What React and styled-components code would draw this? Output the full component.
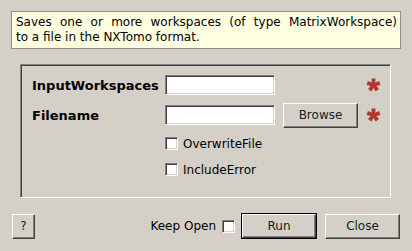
import React from 'react'
import styled, { createGlobalStyle } from 'styled-components'

const Global = createGlobalStyle`
    html, body {
        margin: 0;
        padding: 0;
        background: #d4d0c8;
    }
    body {
        font-family: 'DejaVu Sans', 'Liberation Sans', sans-serif;
        font-size: 12px;
        color: #000;
    }
`

const Dialog = styled.div`
    width: 412px;
    height: 251px;
    box-sizing: border-box;
    padding-top: 11px;
    display: flex;
    flex-direction: column;
    background: #d4d0c8;
`

const Description = styled.div`
    margin: 0 11px;
    height: 38px;
    box-sizing: border-box;
    padding: 3px 3px 0 4px;
    background: #ffffe1;
    border: 1px solid #8e8e8e;
    line-height: 15px;
`

const JustifiedLine = styled.div`
    text-align: justify;
    text-align-last: justify;
    white-space: nowrap;
`

const GroupBox = styled.div`
    margin: 15px 0 0 20px;
    width: 371px;
    height: 134px;
    box-sizing: border-box;
    border-top: 1px solid #808080;
    border-left: 1px solid #808080;
    border-right: 1px solid #fff;
    border-bottom: 1px solid #fff;
    box-shadow: inset 1px 1px 0 #404040;
    padding: 7px 0 0 11px;
`

const FieldGrid = styled.div`
    display: grid;
    grid-template-columns: 125px 110px 75px 15px;
    grid-template-rows: 26px 26px 23px 21px;
    column-gap: 8px;
    row-gap: 4px;
    align-items: center;
`

const Label = styled.div`
    font-weight: bold;
    font-size: 13px;
    white-space: nowrap;
`

const TextInput = styled.div`
    height: 20px;
    box-sizing: border-box;
    background: #fff;
    border-top: 1px solid #808080;
    border-left: 1px solid #808080;
    border-right: 1px solid #fff;
    border-bottom: 1px solid #fff;
    box-shadow: inset 1px 1px 0 #404040, inset -1px -1px 0 #d4d0c8;
`

const Button = styled.div`
    display: flex;
    align-items: center;
    justify-content: center;
    box-sizing: border-box;
    width: ${p => p.$w}px;
    height: ${p => p.$h}px;
    background: #d4d0c8;
    border-top: 1px solid #fff;
    border-left: 1px solid #fff;
    border-right: 1px solid #404040;
    border-bottom: 1px solid #404040;
    box-shadow: inset -1px -1px 0 #808080;
    font-size: 12px;
    color: #1a1a1a;
`

const DefaultFrame = styled.div`
    border: 1px solid #000;
    display: flex;
`

const CheckRow = styled.label`
    grid-column: 2 / span 3;
    display: flex;
    align-items: center;
    gap: 5px;
    white-space: nowrap;
`

const CheckBox = styled.span`
    display: inline-block;
    width: 13px;
    height: 13px;
    box-sizing: border-box;
    background: #fff;
    border-top: 1px solid #808080;
    border-left: 1px solid #808080;
    border-right: 1px solid #fff;
    border-bottom: 1px solid #fff;
    box-shadow: inset 1px 1px 0 #404040, inset -1px -1px 0 #d4d0c8;
`

const StarCell = styled.div`
    display: flex;
    align-items: center;
    justify-content: center;
`

const Footer = styled.div`
    margin-top: 15px;
    padding: 0 12px;
    display: flex;
    align-items: center;
`

const Spacer = styled.div`
    flex: 1;
`

const KeepOpen = styled.label`
    display: flex;
    align-items: center;
    gap: 6px;
    margin-right: 6px;
`

const RightButtons = styled.div`
    display: flex;
    align-items: center;
    gap: 8px;
`

function Asterisk() {
    const arms = [0, 72, 144, 216, 288]
    return (
        <svg width="16" height="16" viewBox="-8 -8 16 16">
            {arms.map(a => (
                <path
                    key={a}
                    d="M-1.6 0 L-2.2 -7 L2.2 -7 L1.6 0 Z"
                    fill="#b3362c"
                    transform={`rotate(${a})`}
                />
            ))}
            <circle r="2.4" fill="#b3362c" />
        </svg>
    )
}

export default function App() {
    return (
        <Dialog>
            <Global />
            <Description>
                <JustifiedLine>Saves one or more workspaces (of type MatrixWorkspace)</JustifiedLine>
                <div>to a file in the NXTomo format.</div>
            </Description>
            <GroupBox>
                <FieldGrid>
                    <Label>InputWorkspaces</Label>
                    <TextInput />
                    <div />
                    <StarCell>
                        <Asterisk />
                    </StarCell>

                    <Label>Filename</Label>
                    <TextInput />
                    <Button $w={75} $h={25}>Browse</Button>
                    <StarCell>
                        <Asterisk />
                    </StarCell>

                    <div />
                    <CheckRow>
                        <CheckBox />
                        OverwriteFile
                    </CheckRow>

                    <div />
                    <CheckRow>
                        <CheckBox />
                        IncludeError
                    </CheckRow>
                </FieldGrid>
            </GroupBox>
            <Footer>
                <Button $w={23} $h={25}>?</Button>
                <Spacer />
                <KeepOpen>
                    Keep Open
                    <CheckBox />
                </KeepOpen>
                <RightButtons>
                    <DefaultFrame>
                        <Button $w={74} $h={24}>Run</Button>
                    </DefaultFrame>
                    <Button $w={75} $h={25}>Close</Button>
                </RightButtons>
            </Footer>
        </Dialog>
    )
}
